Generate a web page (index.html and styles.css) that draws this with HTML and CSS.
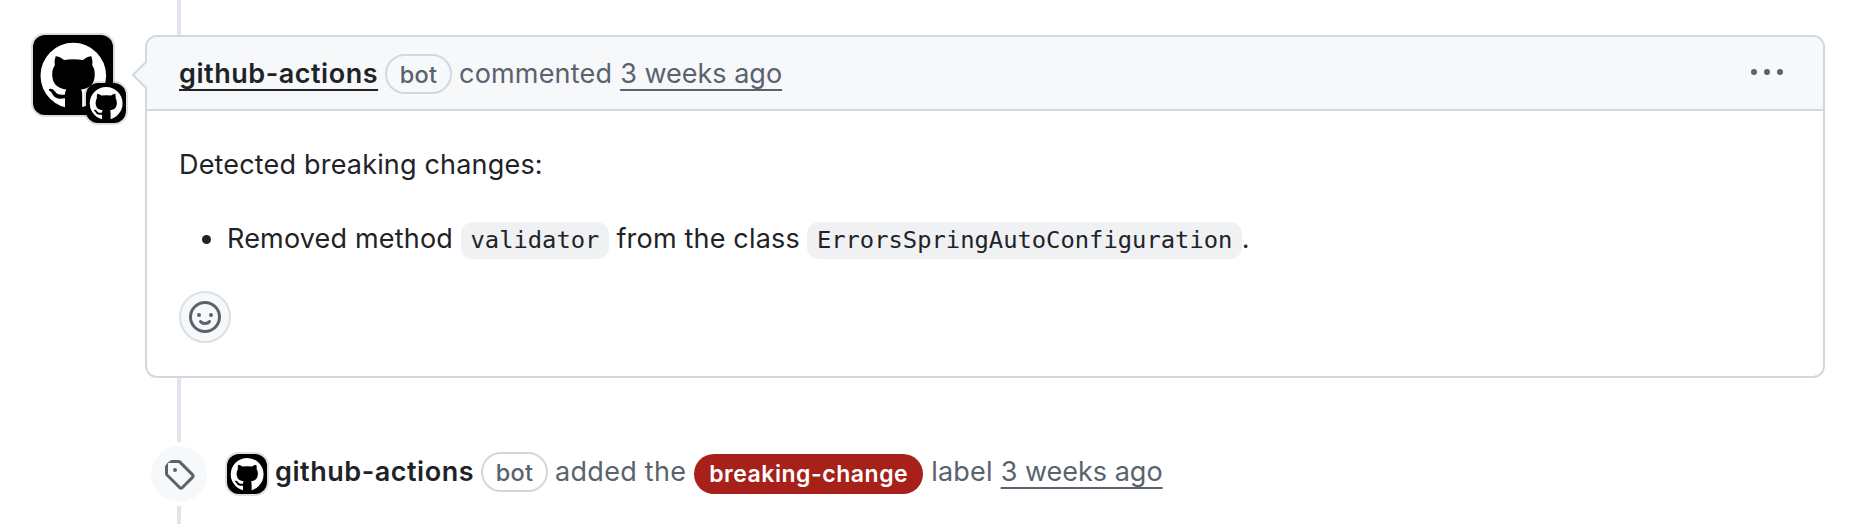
FILE: index.html
```html
<!DOCTYPE html>
<html lang="en">
<head>
<meta charset="utf-8">
<title>github-actions comment</title>
<link rel="stylesheet" href="styles.css">
</head>
<body>
<svg class="defs" width="0" height="0" aria-hidden="true">
  <symbol id="mark" viewBox="0 0 80 80">
    <circle cx="40.3" cy="40.6" r="32.8" fill="#fff"/>
    <path d="M22.600 21.300C25 21.300 28.500 23 31 25Q40.500 23.600 50 25C52.500 23 56 21.300 58.400 21.300Q60 26 59.300 30.500Q62 34 61.700 40C61.500 49 57 53.500 48 54.600Q49.200 56 49.200 60V80H32V63.300C25 64.500 21.500 63 19.500 59.200Q18.500 56.800 15.800 55.200C16 52.600 20.500 53.600 22.500 57C24 59.500 27.500 60 32 59.400Q32 56 33.400 54.600C24.500 53.500 19.500 49 19.200 40Q19 34 21.800 30.500Q21 26 22.600 21.300Z" fill="#000"/>
  </symbol>
</svg>
<main class="timeline">
  <section class="comment">
    <div class="avatars">
      <svg class="avatar avatar-lg"><use href="#mark"/></svg>
      <svg class="avatar avatar-badge"><use href="#mark"/></svg>
    </div>
    <article class="card">
      <svg class="caret" viewBox="0 0 16 30"><path d="M16 1 2 15l14 14" fill="#f6f8fa" stroke="#d1d9e0" stroke-width="2"/></svg>
      <header class="card-header">
        <a class="author underlined">github-actions</a>
        <span class="pill">bot</span>
        <span class="action">commented</span>
        <a class="time underlined">3 weeks ago</a>
        <svg class="kebab" viewBox="0 0 16 16"><path d="M8 9a1.500 1.500 0 1 0 0-3 1.500 1.500 0 0 0 0 3ZM1.500 9a1.500 1.500 0 1 0 0-3 1.500 1.500 0 0 0 0 3Zm13 0a1.500 1.500 0 1 0 0-3 1.500 1.500 0 0 0 0 3Z"/></svg>
      </header>
      <div class="card-body">
        <p class="lead">Detected breaking changes:</p>
        <ul class="changes">
          <li><span>Removed method</span><code>validator</code><span class="joiner">from the class</span><code>ErrorsSpringAutoConfiguration</code><span>.</span></li>
        </ul>
        <button class="react" aria-label="Add reaction"><svg viewBox="0 0 16 16"><circle cx="8" cy="8" r="7.250" fill="none" stroke="currentColor" stroke-width="1.500"/><circle cx="5" cy="7" r="1"/><circle cx="11" cy="7" r="1"/><path d="M5.750 10.250C6.300 11 7 11.250 8 11.250s1.700-.25 2.250-1" fill="none" stroke="currentColor" stroke-width="1.500" stroke-linecap="round"/></svg></button>
      </div>
    </article>
  </section>
  <section class="event">
    <div class="event-badge"><svg viewBox="0 0 16 16"><path d="M1 7.775V2.750C1 1.784 1.784 1 2.750 1h5.025c.464 0 .91.184 1.238.513l6.250 6.250a1.750 1.750 0 0 1 0 2.474l-5.026 5.026a1.750 1.750 0 0 1-2.474 0l-6.250-6.250A1.752 1.752 0 0 1 1 7.775Zm1.500 0c0 .066.026.13.073.177l6.250 6.250a.25.25 0 0 0 .354 0l5.025-5.025a.25.25 0 0 0 0-.354l-6.250-6.250a.25.25 0 0 0-.177-.073H2.750a.25.25 0 0 0-.25.25ZM6 5a1 1 0 1 1 0 2 1 1 0 0 1 0-2Z"/></svg></div>
    <svg class="avatar avatar-sm"><use href="#mark"/></svg>
    <div class="event-text">
      <a class="author">github-actions</a>
      <span class="pill pill-plain">bot</span>
      <span class="action">added the</span>
      <span class="label">breaking-change</span>
      <span class="noun">label</span>
      <a class="time underlined">3 weeks ago</a>
    </div>
  </section>
</main>
</body>
</html>
```
FILE: styles.css
```css
* { box-sizing: border-box; }
body {
  margin: 0;
  height: 524px;
  overflow: hidden;
  background: #fff;
  color: #1f2328;
  font: 27px/42px Inter, "Liberation Sans", sans-serif;
  letter-spacing: 0.18px;
}
svg { display: block; fill: currentColor; }
.defs { position: absolute; }
.timeline { position: relative; height: 524px; padding: 35px 25px 0 33px; }
.timeline::before {
  content: "";
  position: absolute;
  z-index: -1;
  left: 177px;
  top: 0;
  width: 4px;
  height: 524px;
  background: #e1e4ea;
}
.comment { display: grid; grid-template-columns: 80px 1fr; gap: 32px; }
.avatars { position: relative; width: 80px; height: 80px; }
.avatar { background: #000; box-shadow: 0 0 0 2px rgba(31, 35, 40, 0.15); }
.avatar-lg { width: 80px; height: 80px; border-radius: 12px; }
.avatar-badge { position: absolute; left: 52.5px; top: 48px; width: 40px; height: 40px; border-radius: 12px; }
.avatar-sm { width: 40px; height: 40px; border-radius: 12px; margin-left: 16px; }
.card { position: relative; height: 343px; border: 2px solid #d1d9e0; border-radius: 12px; background: #fff; }
.caret { position: absolute; left: -16px; top: 23px; width: 16px; height: 30px; }
.card-header {
  display: flex;
  align-items: baseline;
  height: 74px;
  padding: 0 40px 0 32px;
  border-bottom: 2px solid #d1d9e0;
  border-radius: 10px 10px 0 0;
  background: #f6f8fa;
  color: #59636e;
  line-height: 74px;
}
.author { color: #1f2328; font-weight: 600; letter-spacing: 0.53px; }
.underlined { text-decoration: underline 2px; text-underline-offset: 6px; text-decoration-skip-ink: none; }
.pill {
  width: 67px;
  height: 40px;
  margin-left: 7px;
  border: 2px solid #d1d9e0;
  border-radius: 20px;
  color: #59636e;
  font-size: 23.5px;
  font-weight: 500;
  letter-spacing: 0.3px;
  line-height: 38px;
  text-align: center;
}
.pill-plain { font-weight: 450; }
.action { margin-left: 7px; }
.event-text .action { letter-spacing: 0.28px; }
.time, .label, .noun { margin-left: 8px; }
.time { letter-spacing: 0; }
.kebab { width: 32px; height: 32px; margin-left: auto; align-self: flex-start; margin-top: 20px; }
.card-body { padding: 33px 32px 32px; }
.lead { margin: 0 0 32px; }
.changes { margin: 0 0 31px; padding: 0; list-style: none; }
.changes li { display: flex; align-items: baseline; height: 42px; padding-left: 48px; }
.changes li::before { content: ""; width: 9px; height: 9px; margin: 0 16px 0 -25px; border-radius: 50%; background: currentColor; align-self: center; }
code {
  position: relative;
  margin-left: 8px;
  padding: 5px 9.500px;
  border-radius: 12px;
  background: #eff1f2;
  font: 23.800px/27px "DejaVu Sans Mono", monospace;
  letter-spacing: 0;
}
.joiner { margin-left: 7.5px; }
.joiner + code { margin-left: 7.5px; }
.react {
  display: grid;
  place-items: center;
  width: 52px;
  height: 52px;
  padding: 0;
  border: 2px solid #dae0e7;
  border-radius: 50%;
  background: #f6f8fa;
  color: #59636e;
}
.react svg { width: 32px; height: 32px; }
.event { display: flex; align-items: center; margin: 64px 0 0 114px; }
.event-badge { width: 64px; height: 64px; padding: 4px; background: #fff; color: #59636e; }
.event-badge svg { width: 56px; height: 56px; padding: 12px; border-radius: 50%; background: #f6f8fa; }
.event-text { display: flex; align-items: baseline; height: 42px; margin: -5px 0 0 8px; color: #59636e; }
.label {
  width: 229px;
  height: 40px;
  border-radius: 20px;
  background: #a7211a;
  color: #fff;
  font-size: 23px;
  font-weight: 600;
  letter-spacing: 0.53px;
  line-height: 41px;
  text-align: center;
  transform: translateY(1px);
}
```
